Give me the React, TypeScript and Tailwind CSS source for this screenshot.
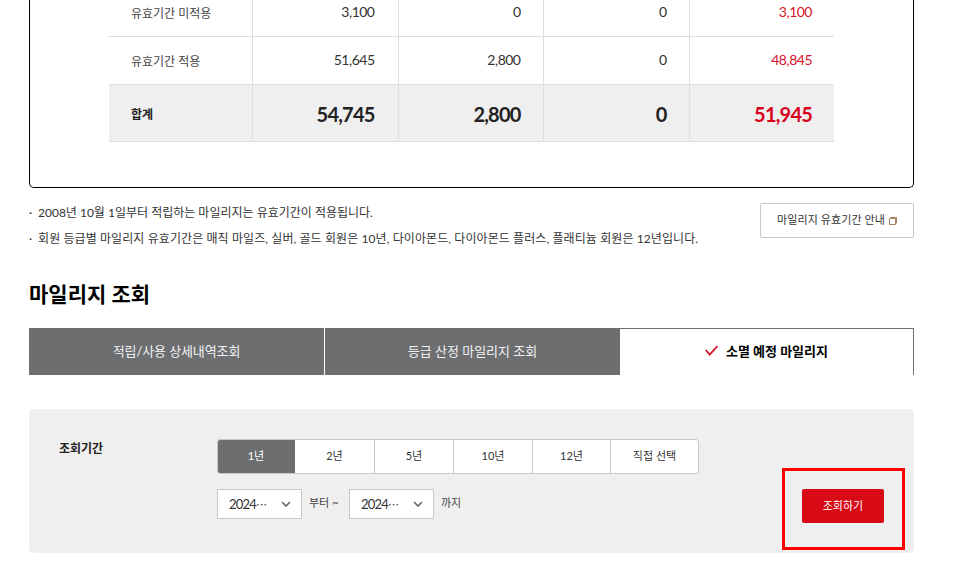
import React from "react";

const FONT = "font-['Lato','Noto_Sans_CJK_KR',sans-serif]";

const ROWS = [
  { label: "유효기간 미적용", values: ["3,100", "0", "0", "3,100"], height: "h-[47px]" },
  { label: "유효기간 적용", values: ["51,645", "2,800", "0", "48,845"], height: "h-[48px]" },
];
const TOTAL = ["54,745", "2,800", "0", "51,945"];
const PERIODS = ["2년", "5년", "10년", "12년", "직접 선택"];
const PERIOD_WIDTHS = ["w-[79px]", "w-[79px]", "w-[79px]", "w-[78px]", "flex-1"];

function DateSelect() {
  return (
    <div className="w-[85px] h-[30px] bg-white border border-[#c8c8c8] flex items-center justify-between pl-[11px] pr-[10px] text-[13px] text-[#333]">
      <span className="tracking-[-0.8px] pt-[2px]">
        2024<span className="text-[11px] tracking-normal">⋯</span>
      </span>
      <svg width="10" height="6" viewBox="0 0 10 6" fill="none" stroke="#666" strokeWidth="1.6">
        <path d="M1 1l4 4 4-4" />
      </svg>
    </div>
  );
}

export default function App() {
  return (
    <div className={`${FONT} w-[958px] h-[569px] overflow-hidden bg-white text-[#222] relative`}>
      <div className="px-[29px] w-[943px]">
        <div className="flow-root border border-black border-t-0 rounded-b-[5px] h-[188px] px-[79px]">
          <table className="w-[725px] -mt-[11px] table-fixed border-collapse">
            <colgroup>
              <col className="w-[143px]" />
              <col className="w-[146px]" />
              <col className="w-[145px]" />
              <col className="w-[146px]" />
              <col className="w-[145px]" />
            </colgroup>
            <tbody>
              {ROWS.map((row) => (
                <tr key={row.label} className={`border-b border-[#dedede] ${row.height}`}>
                  <td className="pl-[22px] pt-[4px] text-xs text-[#444]">{row.label}</td>
                  {row.values.map((v, j) => (
                    <td
                      key={j}
                      className={`border-l border-[#dedede] text-right text-sm tracking-[-0.5px] ${j === 0 ? "pr-[23px]" : "pr-[22px]"} ${j === 3 ? "text-[#d9122a]" : "text-[#333]"}`}
                    >
                      {v}
                    </td>
                  ))}
                </tr>
              ))}
              <tr className="h-[57px] bg-[#efefef] border-b border-[#dedede]">
                <td className="pl-[22px] pt-[4px] text-xs font-bold">합계</td>
                {TOTAL.map((v, j) => (
                  <td
                    key={j}
                    className={`border-l border-[#dedede] text-right pt-[2px] text-xl font-bold tracking-[-0.8px] ${j === 0 ? "pr-[23px]" : "pr-[22px]"} ${j === 3 ? "text-[#d7001d]" : "text-[#222]"}`}
                  >
                    {v}
                  </td>
                ))}
              </tr>
            </tbody>
          </table>
        </div>

        <div className="flex justify-between items-start mt-[15px]">
          <ul className="text-xs text-[#333] pt-[1px] space-y-[8px]">
            <li className="flex leading-[18px]">
              <span className="w-[9px]">·</span>2008년 10월 1일부터 적립하는 마일리지는 유효기간이 적용됩니다.
            </li>
            <li className="flex leading-[18px] tracking-[0.09px]">
              <span className="w-[9px]">·</span>회원 등급별 마일리지 유효기간은 매직 마일즈, 실버, 골드 회원은 10년, 다이아몬드, 다이아몬드 플러스, 플래티늄 회원은 12년입니다.
            </li>
          </ul>
          <button className="w-[154px] h-[35px] border border-[#c8c8c8] rounded-[2px] text-[11px] tracking-[0.1px] text-[#333] flex items-center justify-center gap-[4px]">
            마일리지 유효기간 안내
            <svg width="8" height="8" viewBox="0 0 8 8" fill="none" stroke="#a5835f" strokeWidth="1">
              <path d="M.5 1.5h6v6h-6zM1.5 .5h6v6" />
            </svg>
          </button>
        </div>

        <h2 className="text-[21px] leading-[30px] font-bold text-black mt-[31px]">마일리지 조회</h2>

        <div className="flex mt-[19px] h-[47px] text-[13px]">
          <div className="w-[295px] bg-[#6d6e70] text-[#f2f2f2] tracking-[-0.1px] flex items-center justify-center">적립/사용 상세내역조회</div>
          <div className="w-[296px] bg-[#6d6e70] text-[#f2f2f2] border-l border-white flex items-center justify-center">등급 산정 마일리지 조회</div>
          <div className="w-[294px] border-t border-r border-[#6d6e70] text-black font-bold flex items-center justify-center gap-[8px]">
            <svg width="13" height="11" viewBox="0 0 13 11" fill="none" stroke="#d9122a" strokeWidth="1.8" className="-mt-[3px]">
              <path d="M.7 5l4 4.6L12.4 1" />
            </svg>
            소멸 예정 마일리지
          </div>
        </div>

        <div className="mt-[34px] h-[144px] bg-[#efefef] rounded-[5px] flex pl-[30px] pr-[30px] pt-[30px] text-xs">
          <div className="w-[158px] font-bold text-[#222] leading-[20px]">조회기간</div>
          <div className="flex-1">
            <div className="flex w-[482px] h-[35px] rounded-[3px] overflow-hidden border border-[#c8c8c8] bg-white text-[11px] text-[#333]">
              <div className="w-[78px] -m-[1px] mr-0 bg-[#6d6e70] text-white flex items-center justify-center">1년</div>
              {PERIODS.map((p, i) => (
                <div
                  key={p}
                  className={`flex items-center justify-center ${PERIOD_WIDTHS[i]} ${i === 0 ? "" : "border-l border-[#c8c8c8]"}`}
                >
                  {p}
                </div>
              ))}
            </div>
            <div className="flex items-start mt-[15px]">
              <DateSelect />
              <span className="ml-[7px] w-[40px] text-[11px] text-[#444] leading-[28px]">부터 ~</span>
              <DateSelect />
              <span className="ml-[7px] text-[11px] text-[#444] leading-[28px]">까지</span>
            </div>
          </div>
          <button className="w-[82px] h-[34px] mt-[50px] bg-[#d70a16] text-white text-[11px] rounded-[2px] shrink-0 -ml-[52px]">조회하기</button>
        </div>
      </div>

      <div className="absolute left-[782px] top-[468px] w-[123px] h-[82px] border-[3px] border-[#ff0000]" />
    </div>
  );
}
